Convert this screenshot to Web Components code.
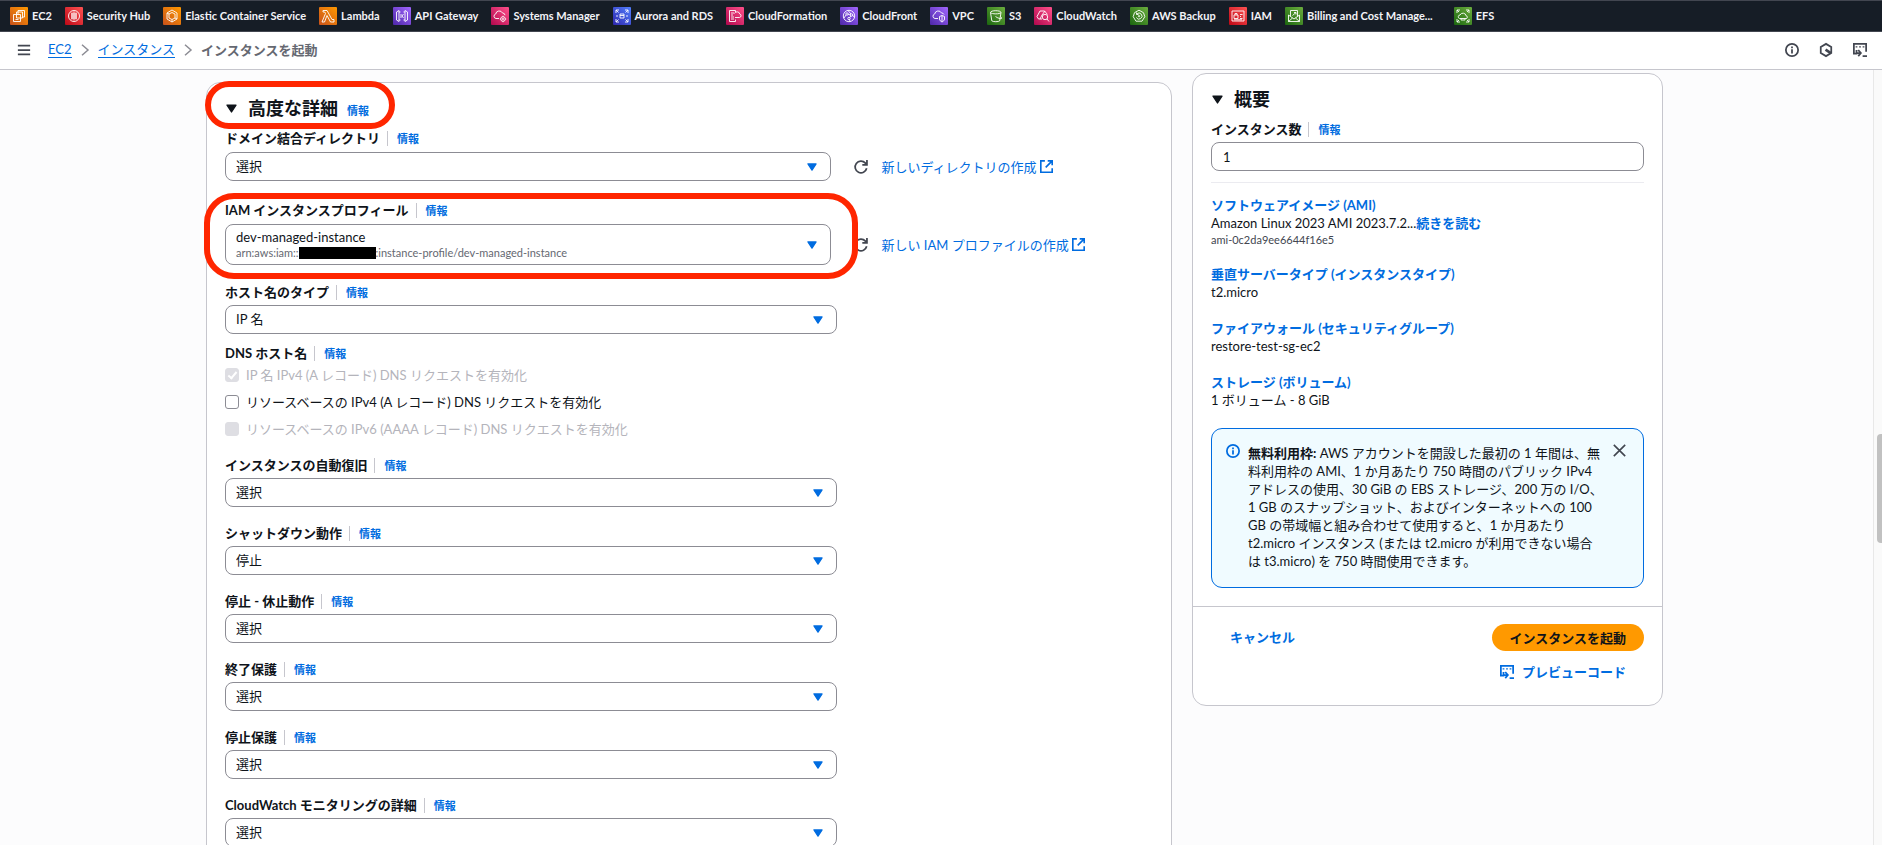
<!DOCTYPE html>
<html lang="ja">
<head>
<meta charset="utf-8">
<title>インスタンスを起動 | EC2</title>
<style>
    :root {
        --link: #006ce0;
        --text: #0f141a;
        --muted: #656871;
        --line: #c6c6cd;
        --control: #8c8c94;
    }

    body {
        margin: 0;
        height: 100vh;
        display: flex;
        flex-direction: column;
        overflow: hidden;
        background: #fff;
        color: var(--text);
        font: 13px/18px Lato, "Noto Sans CJK JP", sans-serif;
    }
</style>
</head>
<body>
<service-bar></service-bar>
<crumb-bar></crumb-bar>
<launch-page></launch-page>

<script>
const icons = {
    ec2: '<path d="M3.500 7.500h7v7h-7zM6.500 5h6v6h-6zM8 7.500V3.500h6.500V10H12.500M5.500 12.500h3"/>',
    shield: '<circle cx="9" cy="9" r="5.500"/><path d="M6 7h6M6 9h6M6 11h6M9 4.500v9M7 5.500v7M11 5.500v7"/>',
    ecs: '<path d="M9 3l5 3v6l-5 3-5-3V6zM9 5.500l3 1.500v4l-3 1.500L6 11V7zM4 6l2 1M14 12l-2-1M9 15v-2.500"/>',
    lambda: '<path d="M4 3.500h4l5 9h2v2.500h-3.500L8 8.500 5.500 15H3l3.500-8.500-.8-1.500H4z"/>',
    api: '<path d="M3.500 5L6 3.500v11L3.500 13zM14.500 5L12 3.500v11l2.500-1.500zM6 5h1.500M10.500 5H12M6 13h1.500M10.500 13H12M8 7v4M10.500 7L9 9l1.500 2"/>',
    ssm: '<path d="M8 11.500H5a2.300 2.300 0 0 1-.3-4.500A3.600 3.600 0 0 1 11.500 6 2.500 2.500 0 0 1 14 8.200"/><circle cx="12" cy="12" r="2.300"/><circle cx="12" cy="12" r=".6"/><path d="M12 8.800v1M12 14.200v1M8.800 12h1M14.200 12h1"/>',
    rds: '<path d="M3 6V3h3M12 3h3v3M15 12v3h-3M6 15H3v-3M3 3l2.500 2.500M15 3l-2.500 2.500M15 15l-2.500-2.500M3 15l2.500-2.500M7 7h4v4H7zM7 8.500h4M3 9h2M13 9h2"/>',
    cfn: '<path d="M9.500 12.500v2h-6v-11h6V5M5 6h3M5 8h2M5 10h3M5 12h3M9 10.500h4.500a1.800 1.800 0 0 0 .3-3.500 2.800 2.800 0 0 0-5.300-.5"/>',
    front: '<circle cx="9" cy="9" r="5.700"/><circle cx="7" cy="7" r="1.200"/><circle cx="11.500" cy="8" r="1.200"/><circle cx="9" cy="11.500" r="1.200"/><path d="M4 11l2-3M10.300 8L8 7.200M11 9l-1.200 1.500M8 3.500L11 7M12.500 8.500l2 1.500M9.500 12.500l.5 2"/>',
    vpc: '<path d="M8 11.500H5a2.300 2.300 0 0 1-.3-4.500A3.600 3.600 0 0 1 11.500 6 2.500 2.500 0 0 1 14 7.500M12 8.500l2.500 1v2.500c0 1.500-1.300 2.300-2.500 3-1.200-.7-2.500-1.500-2.500-3V9.500zM12 8.500V15"/>',
    s3: '<path d="M3.500 5.500c0-2.400 10.500-2.400 10.500 0l-1.300 8.300c-.8 1.200-7 1.200-7.900 0zM3.500 5.500c1 1.800 9.500 1.800 10.500 0M8.500 9.500c2 1.500 5 2.500 6 2 .8-.5-.5-1.500-1-1.700"/>',
    watch: '<path d="M8 12H4.500L3 9.500l3-5.500h4.500l3 3.500"/><path d="M6 12l2-4 3-4"/><circle cx="11" cy="10" r="2.700"/><path d="M13 12l2 2.500"/>',
    backup: '<path d="M9 3.200l4.500 2.500 1.300 4-2.800 4.500H6L3.200 9.700l1.300-4z"/><path d="M6.800 7A3 3 0 1 1 6.300 10.500M6.500 5.500V7.500h2"/><circle cx="9" cy="9.200" r=".7"/>',
    iam: '<path d="M3 4h12v10H3zM5 8h4v3.500H5zM6 8V6.500h2V8M11 7.500h2.500M11 9.500h1M11 11.500h2.500M5 12.800h8"/>',
    billing: '<path d="M5.500 9V3.500h7V9M3.500 8L9 12l5.500-4v6.500h-11zM3.500 14.500L7.500 11M14.500 14.500L10.500 11M7.500 8.500L11 5.500M9 5.500h2v2"/>',
    efs: '<path d="M3 6V3h3M12 3h3v3M15 12v3h-3M6 15H3v-3M3 3l2 2M15 3l-2 2M15 15l-2-2M3 15l2-2M5.500 11.500H12a1.300 1.300 0 0 0 .2-2.600A3.300 3.300 0 0 0 6 8 1.800 1.800 0 0 0 5.500 11.500zM7 11.500V13h4v-1.500"/>'
};

const gradients = {
    orange: 'linear-gradient(45deg, #c8511b, #f90)',
    red: 'linear-gradient(45deg, #bd0816, #ff5252)',
    purple: 'linear-gradient(45deg, #4d27a8, #a166ff)',
    pink: 'linear-gradient(45deg, #b0084d, #ff4f8b)',
    blue: 'linear-gradient(45deg, #2e27ad, #527fff)',
    green: 'linear-gradient(45deg, #1b660f, #6cae3e)'
};

const services = [
    ['EC2', 'ec2', 'orange'],
    ['Security Hub', 'shield', 'red'],
    ['Elastic Container Service', 'ecs', 'orange'],
    ['Lambda', 'lambda', 'orange'],
    ['API Gateway', 'api', 'purple'],
    ['Systems Manager', 'ssm', 'pink'],
    ['Aurora and RDS', 'rds', 'blue'],
    ['CloudFormation', 'cfn', 'pink'],
    ['CloudFront', 'front', 'purple'],
    ['VPC', 'vpc', 'purple'],
    ['S3', 's3', 'green'],
    ['CloudWatch', 'watch', 'pink'],
    ['AWS Backup', 'backup', 'green'],
    ['IAM', 'iam', 'red'],
    ['Billing and Cost Manage...', 'billing', 'green'],
    ['EFS', 'efs', 'green']
];

const glyphs = {
    menu: '<path d="M1 3h14M1 8h14M1 13h14"/>',
    chevron: '<path d="M4 1l8 7-8 7"/>',
    info: '<circle cx="8" cy="8" r="7"/><path d="M8 7v5M8 4v2"/>',
    hexagon: '<path d="M8 1l6 3.500v7L8 15l-6-3.500v-7z"/><path d="M7.500 7.500l6 4" stroke-width="3"/>',
    shell: '<path d="M5 12H1V1h14v9M11 15h5"/><path d="M3 4.500h2M7 4.500h2M11 4.500h2" stroke-width="1.500"/><path d="M4 8v3.500h4.500M6 8l3 3.500L6 15"/>',
    refresh: '<path d="M14.500 9.500A6.700 6.700 0 1 1 13 3.500l1.500 2M14.800 0v5.500H9.500"/>',
    external: '<path d="M6 1H1v14h14v-5M9.500 1H15v5.500M15 1L7 9"/>',
    close: '<path d="M1 1l14 14M15 1L1 15"/>',
    caret: '<path d="M1.500 3h13L8 13z" fill="currentColor" stroke-linejoin="round"/>'
};

// base for everything below: opens the shadow root and drops the template in
class BaseElement extends HTMLElement {
    connectedCallback() {
        if (!this.shadowRoot) {
            this.attachShadow({mode: 'open'}).innerHTML = this.template;
        }
    }

    attr(name) {
        return this.getAttribute(name) || '';
    }
}

class UiIcon extends BaseElement {
    get template() {
        return `
            <style>
                :host { display: inline-flex; width: 14px; height: 14px; flex: none; }
                svg { width: 100%; height: 100%; overflow: visible; }
            </style>
            <svg viewBox="0 0 16 16" fill="none" stroke="currentColor" stroke-width="2" aria-hidden="true">${glyphs[this.attr('name')]}</svg>
        `;
    }
}

class InfoLink extends BaseElement {
    get template() {
        return `
            <style>
                :host { display: inline-flex; }
                :host([divided]) { border-left: 1px solid var(--line); margin-left: 7px; padding-left: 9px; }
                a { color: var(--link); font-size: 11px; line-height: 15px; font-weight: 700; text-decoration: none; }
            </style>
            <a href="#info">情報</a>
        `;
    }
}

class ServiceBar extends BaseElement {
    get template() {
        return `
            <style>
                :host { display: block; flex: none; background: #161d26; border: solid #424650; border-width: 1px 0; }
                nav { display: flex; gap: 13px; padding: 6px 10px; height: 18px; }
                a {
                    display: flex; align-items: center; gap: 4px;
                    color: #f3f3f7; font-size: 11px; font-weight: 700; line-height: 18px;
                    text-decoration: none; white-space: nowrap;
                }
                a:nth-child(15) { margin-right: 8px; }
                svg { width: 18px; height: 18px; border-radius: 1px; }
            </style>
            <nav>
                ${services.map(([name, icon, color]) => `
                    <a href="#${icon}">
                        <svg viewBox="0 0 18 18" fill="none" stroke="#fff" stroke-width=".9" style="background:${gradients[color]}">${icons[icon]}</svg>
                        ${name}
                    </a>`).join('')}
            </nav>
        `;
    }
}

class CrumbBar extends BaseElement {
    get template() {
        return `
            <style>
                :host {
                    display: flex; flex: none; align-items: center; justify-content: space-between;
                    height: 35px; padding: 0 15px 2px 17px; border-bottom: 1px solid var(--line);
                }
                ol { display: flex; align-items: center; gap: 7px; margin: 0; padding: 0; list-style: none; }
                nav, .tools { display: flex; align-items: center; gap: 17px; }
                .tools { gap: 20px; }
                a { color: var(--link); text-decoration: none; border-bottom: 1px solid; line-height: 16px; display: block; }
                button { display: flex; padding: 0; border: 0; background: none; color: #424650; }
                li { display: flex; }
                li ui-icon { width: 12px; height: 12px; color: var(--control); }
                b { color: var(--muted); }
            </style>
            <nav aria-label="Breadcrumb">
                <button aria-label="menu"><ui-icon name="menu"></ui-icon></button>
                <ol>
                    <li><a href="#ec2">EC2</a></li>
                    <li><ui-icon name="chevron"></ui-icon></li>
                    <li><a href="#instances">インスタンス</a></li>
                    <li><ui-icon name="chevron"></ui-icon></li>
                    <li><b>インスタンスを起動</b></li>
                </ol>
            </nav>
            <div class="tools">
                <button aria-label="info"><ui-icon name="info"></ui-icon></button>
                <button aria-label="assistant"><ui-icon name="hexagon"></ui-icon></button>
                <button aria-label="CloudShell"><ui-icon name="shell"></ui-icon></button>
            </div>
        `;
    }
}

class PanelCard extends BaseElement {
    get template() {
        return `
            <style>
                :host { display: block; background: #fff; border: 1px solid var(--line); border-radius: 14px; }
                .body { padding: 0 18px; }
                header { display: flex; padding: 13px 0 9px; }
                .title { display: flex; align-items: center; gap: 11px; padding-left: 1px; position: relative; }
                h2 { margin: 0; font-size: 18px; line-height: 24px; }
                ui-icon { width: 11px; height: 11px; }
                ::slotted(info-link) { margin-left: -2px; padding-top: 4px; }
                :host([ringed]) .title::after {
                    content: ''; position: absolute; inset: -15px -26px -9px -20px;
                    border: 6px solid #ff2600; border-radius: 24px; pointer-events: none;
                }
            </style>
            <div class="body">
                <header>
                    <div class="title">
                        <ui-icon name="caret"></ui-icon>
                        <h2>${this.attr('heading')}</h2>
                        <slot name="info"></slot>
                    </div>
                </header>
                <slot></slot>
            </div>
            <slot name="footer"></slot>
        `;
    }
}

class SelectField extends BaseElement {
    get template() {
        return `
            <style>
                :host { display: grid; grid-template-columns: 66% 1fr; row-gap: 4px; }
                :host([actions]) { grid-template-columns: calc(66% - 6px) 1fr; row-gap: 5px; }
                .label { display: flex; align-items: center; height: 18px; grid-area: 1 / 1 / 2 / 3; }
                label { font-weight: 700; }
                .control { position: relative; display: grid; grid-area: 2 / 1; }
                select {
                    appearance: none; width: 100%; height: 29px; padding: 0 36px 1px 10px;
                    border: 1px solid var(--control); border-radius: 8px;
                    background: #fff; color: inherit; font: inherit;
                }
                :host([detail]) select { height: 41px; padding-bottom: 15px; }
                .control ui-icon {
                    position: absolute; right: 14px; top: calc(50% - 5px);
                    width: 10px; height: 10px; color: var(--link); pointer-events: none;
                }
                .detail {
                    position: absolute; left: 11px; bottom: 5px; display: flex; align-items: center;
                    color: var(--muted); font-size: 11px; line-height: 14px; pointer-events: none;
                }
                .actions { display: flex; align-items: center; padding-left: 23px; grid-area: 2 / 2; }
                .ring { display: none; grid-area: 1 / 1 / 3 / 2; position: relative; pointer-events: none; }
                :host([ringed]) .ring { display: block; }
                .ring::after {
                    content: ''; position: absolute; inset: -8px -27px -14px -21px;
                    border: 6px solid #ff2600; border-radius: 30px;
                }
            </style>
            <div class="label">
                <label for="field">${this.attr('label')}</label>
                <info-link divided></info-link>
            </div>
            <div class="control">
                <select id="field"><option>${this.attr('value')}</option></select>
                <div class="detail"><slot name="detail"></slot></div>
                <ui-icon name="caret"></ui-icon>
            </div>
            <div class="actions"><slot></slot></div>
            <div class="ring"></div>
        `;
    }
}

class CreateLink extends BaseElement {
    get template() {
        return `
            <style>
                :host { display: flex; align-items: center; gap: 13px; }
                button { display: flex; padding: 0; border: 0; background: none; color: #424650; }
                a { display: flex; align-items: center; gap: 3px; color: var(--link); text-decoration: none; }
                a ui-icon { width: 13px; height: 13px; }
            </style>
            <button aria-label="refresh"><ui-icon name="refresh"></ui-icon></button>
            <a href="#create"><slot></slot><ui-icon name="external"></ui-icon></a>
        `;
    }
}

class CheckItem extends BaseElement {
    get template() {
        const flags = ['checked', 'disabled'].filter(flag => this.hasAttribute(flag)).join(' ');

        return `
            <style>
                :host { display: flex; align-items: center; gap: 7px; }
                :host([disabled]) { color: #b4b4bb; }
                input {
                    appearance: none; box-sizing: border-box; width: 14px; height: 14px; margin: 0;
                    border: 1px solid var(--control); border-radius: 3px; background: #fff;
                    display: grid; place-items: center;
                }
                input:disabled { background: #dedee3; border-color: #dedee3; }
                input:checked::after {
                    content: ''; width: 3px; height: 7px; margin-bottom: 2px;
                    border: solid #fff; border-width: 0 2px 2px 0; transform: rotate(40deg);
                }
            </style>
            <input type="checkbox" id="box" ${flags}>
            <label for="box"><slot></slot></label>
        `;
    }
}

class SummaryItem extends BaseElement {
    get template() {
        return `
            <style>
                :host { display: block; }
                a { color: var(--link); font-weight: 700; text-decoration: none; }
                ::slotted(small) { display: block; color: #424650; font-size: 11px; line-height: 15px; }
            </style>
            <div><a href="#edit">${this.attr('heading')}</a></div>
            <slot></slot>
        `;
    }
}

class FlashBox extends BaseElement {
    get template() {
        return `
            <style>
                :host {
                    display: flex; gap: 8px; padding: 15px 17px 17px 14px;
                    background: #f0fbff; border: 1px solid var(--link); border-radius: 11px;
                }
                .info { color: var(--link); }
                p { flex: 1; margin: 0; }
                button { display: flex; align-self: start; padding: 0; border: 0; background: none; color: #424650; }
                button ui-icon { width: 13px; height: 13px; }
            </style>
            <ui-icon class="info" name="info"></ui-icon>
            <p><slot></slot></p>
            <button aria-label="close"><ui-icon name="close"></ui-icon></button>
        `;
    }
}

class LaunchSummary extends BaseElement {
    get template() {
        return `
            <style>
                .count { display: flex; align-items: center; height: 18px; }
                label { font-weight: 700; }
                input {
                    box-sizing: border-box; width: 100%; height: 29px; margin-top: 4px; padding: 0 11px;
                    border: 1px solid var(--control); border-radius: 8px; color: inherit; font: inherit;
                }
                hr { margin: 11px 0 13px; border: 0; border-top: 1px solid #ebebf0; }
                .items { display: grid; gap: 18px; padding-bottom: 19px; }
                a { color: var(--link); font-weight: 700; text-decoration: none; }
                footer {
                    display: flex; justify-content: space-between; align-items: start;
                    margin-top: 18px; padding: 17px 18px 20px; border-top: 1px solid var(--line);
                }
                footer > a { padding: 4px 0 0 19px; }
                .buttons { display: grid; gap: 7px; justify-items: end; }
                button {
                    display: flex; align-items: center; justify-content: center; gap: 8px;
                    height: 27px; padding: 0 18px; border: 0; border-radius: 14px;
                    background: none; color: var(--link); font: inherit; font-weight: 700;
                }
                .primary { background: #f90; color: var(--text); }
            </style>
            <panel-card heading="概要">
                <div class="count">
                    <label for="count">インスタンス数</label>
                    <info-link divided></info-link>
                </div>
                <input id="count" value="1">
                <hr>
                <div class="items">
                    <summary-item heading="ソフトウェアイメージ (AMI)">Amazon Linux 2023 AMI 2023.7.2...<a href="#more">続きを読む</a><small>ami-0c2da9ee6644f16e5</small></summary-item>
                    <summary-item heading="垂直サーバータイプ (インスタンスタイプ)">t2.micro</summary-item>
                    <summary-item heading="ファイアウォール (セキュリティグループ)">restore-test-sg-ec2</summary-item>
                    <summary-item heading="ストレージ (ボリューム)">1 ボリューム - 8 GiB</summary-item>
                </div>
                <flash-box><b>無料利用枠:</b> AWS アカウントを開設した最初の 1 年間は、無料利用枠の AMI、1 か月あたり 750 時間のパブリック IPv4 アドレスの使用、30 GiB の EBS ストレージ、200 万の I/O、1 GB のスナップショット、およびインターネットへの 100 GB の帯域幅と組み合わせて使用すると、1 か月あたり t2.micro インスタンス (または t2.micro が利用できない場合は t3.micro) を 750 時間使用できます。</flash-box>
                <footer slot="footer">
                    <a href="#cancel">キャンセル</a>
                    <div class="buttons">
                        <button class="primary">インスタンスを起動</button>
                        <button><ui-icon name="shell"></ui-icon>プレビューコード</button>
                    </div>
                </footer>
            </panel-card>
        `;
    }
}

class AdvancedDetails extends BaseElement {
    get template() {
        return `
            <style>
                .groups, .profiles, .hosts, .rest, .checks { display: grid; }
                .groups { gap: 18px; }
                .profiles { gap: 20px; }
                .hosts { gap: 10px; }
                .rest { gap: 17px; padding-bottom: 18px; }
                .checks { gap: 9px; }
                fieldset { min-width: 0; margin: 0; padding: 0; border: 0; }
                .legend { display: flex; align-items: center; height: 18px; margin-bottom: 4px; }
                .redacted { display: inline-block; width: 77px; height: 12px; background: #000; }
            </style>
            <panel-card heading="高度な詳細" ringed>
                <info-link slot="info"></info-link>
                <div class="groups">
                    <div class="profiles">
                        <select-field label="ドメイン結合ディレクトリ" value="選択" actions>
                            <create-link>新しいディレクトリの作成</create-link>
                        </select-field>
                        <select-field label="IAM インスタンスプロフィール" value="dev-managed-instance" actions detail ringed>
                            <span slot="detail">arn:aws:iam::</span>
                            <span slot="detail" class="redacted"></span>
                            <span slot="detail">:instance-profile/dev-managed-instance</span>
                            <create-link>新しい IAM プロファイルの作成</create-link>
                        </select-field>
                    </div>
                    <div class="hosts">
                        <select-field label="ホスト名のタイプ" value="IP 名"></select-field>
                        <fieldset aria-labelledby="dns">
                            <div class="legend"><b id="dns">DNS ホスト名</b><info-link divided></info-link></div>
                            <div class="checks">
                                <check-item checked disabled>IP 名 IPv4 (A レコード) DNS リクエストを有効化</check-item>
                                <check-item>リソースベースの IPv4 (A レコード) DNS リクエストを有効化</check-item>
                                <check-item disabled>リソースベースの IPv6 (AAAA レコード) DNS リクエストを有効化</check-item>
                            </div>
                        </fieldset>
                    </div>
                    <div class="rest">
                        <select-field label="インスタンスの自動復旧" value="選択"></select-field>
                        <select-field label="シャットダウン動作" value="停止"></select-field>
                        <select-field label="停止 - 休止動作" value="選択"></select-field>
                        <select-field label="終了保護" value="選択"></select-field>
                        <select-field label="停止保護" value="選択"></select-field>
                        <select-field label="CloudWatch モニタリングの詳細" value="選択"></select-field>
                    </div>
                </div>
            </panel-card>
        `;
    }
}

class LaunchPage extends BaseElement {
    get template() {
        return `
            <style>
                :host { display: flex; flex: 1; min-height: 0; margin-bottom: 2px; overflow: hidden; background: #fcfcfd; }
                main {
                    flex: 1; display: grid; grid-template-columns: minmax(0, 1fr) 471px;
                    gap: 20px; align-items: start; padding: 3px 210px 0 206px;
                }
                advanced-details { display: block; padding-top: 9px; }
                .scrollbar { position: relative; width: 8px; border-left: 1px solid #e8e8e8; background: #fafafa; }
                .thumb {
                    position: absolute; top: 47%; right: 0; width: 5px; height: 14%;
                    border-radius: 4px 0 0 4px; background: #c1c1c1;
                }
            </style>
            <main>
                <advanced-details></advanced-details>
                <launch-summary></launch-summary>
            </main>
            <div class="scrollbar"><div class="thumb"></div></div>
        `;
    }
}

customElements.define('ui-icon', UiIcon);
customElements.define('info-link', InfoLink);
customElements.define('service-bar', ServiceBar);
customElements.define('crumb-bar', CrumbBar);
customElements.define('panel-card', PanelCard);
customElements.define('select-field', SelectField);
customElements.define('create-link', CreateLink);
customElements.define('check-item', CheckItem);
customElements.define('summary-item', SummaryItem);
customElements.define('flash-box', FlashBox);
customElements.define('launch-summary', LaunchSummary);
customElements.define('advanced-details', AdvancedDetails);
customElements.define('launch-page', LaunchPage);
</script>
</body>
</html>
